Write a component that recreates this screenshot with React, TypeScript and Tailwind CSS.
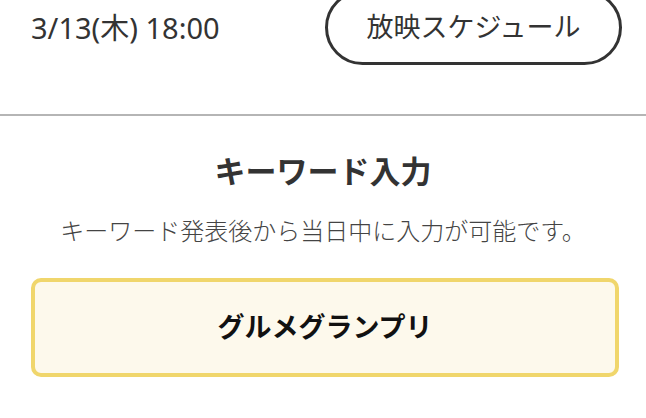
export default function App() {
  const font = { fontFamily: '"Noto Sans", "Noto Sans CJK JP", sans-serif' };

  return (
    <div className="w-[646px] h-[418px] overflow-hidden bg-white text-[#333]" style={font}>
      {/* 上映日時 */}
      <div className="flex items-center justify-between pl-[31px] pr-[24px] -mt-[10px]">
        <span className="text-[29px] leading-none">3/13(木) 18:00</span>
        <button className="h-[75px] w-[297px] rounded-full border-[3px] border-[#333] text-[27px] text-[#333] flex items-center justify-center">
          放映スケジュール
        </button>
      </div>

      <div className="mt-[49px] h-[2px] bg-[#b5b5b5]" />

      {/* キーワード入力 */}
      <div className="flex flex-col items-center">
        <h2 className="mt-[34px] text-[31px] leading-[42px] font-bold text-[#333]">キーワード入力</h2>
        <p className="mt-[22px] text-[24px] leading-[34px] font-light text-[#444]">
          キーワード発表後から当日中に入力が可能です。
        </p>
      </div>

      <div className="mt-[30px] ml-[31px] mr-[27px] h-[99px] rounded-[10px] border-[4px] border-[#f0d66c] bg-[#fdf9ec] flex items-center justify-center">
        <span className="text-[27px] font-bold text-[#111]">グルメグランプリ</span>
      </div>
    </div>
  );
}
